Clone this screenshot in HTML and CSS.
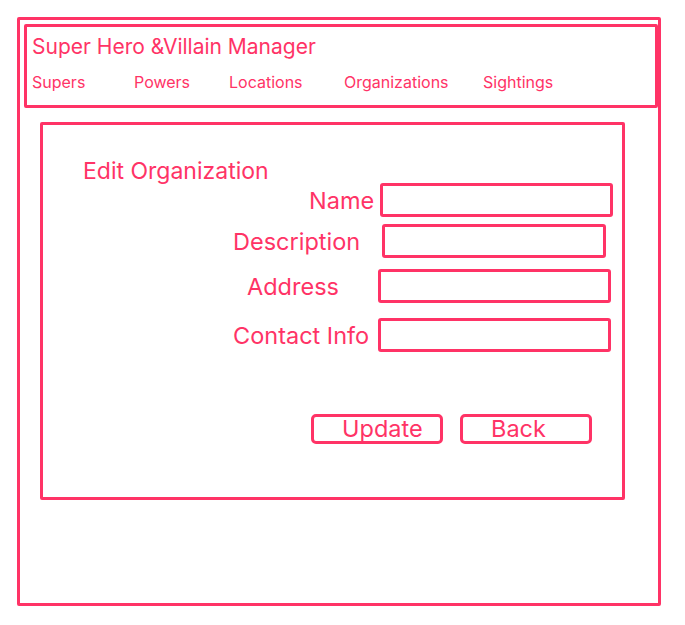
FILE: index.html
```html
<!DOCTYPE html>
<html lang="en">
<head>
<meta charset="utf-8">
<title>Edit Organization</title>
<link rel="stylesheet" href="styles.css">
</head>
<body>
<div class="page">
  <header class="header">
    <div class="title">Super Hero &amp;Villain Manager</div>
    <nav class="nav">
      <a class="nav-item w1">Supers</a>
      <a class="nav-item w2">Powers</a>
      <a class="nav-item w3">Locations</a>
      <a class="nav-item w4">Organizations</a>
      <a class="nav-item">Sightings</a>
    </nav>
  </header>
  <main class="panel">
    <h1 class="heading">Edit Organization</h1>
    <div class="row row-name">
      <label class="label">Name</label>
      <div class="input input-name"></div>
    </div>
    <div class="row row-desc">
      <label class="label">Description</label>
      <div class="input input-desc"></div>
    </div>
    <div class="row row-addr">
      <label class="label">Address</label>
      <div class="input"></div>
    </div>
    <div class="row row-contact">
      <label class="label">Contact Info</label>
      <div class="input"></div>
    </div>
    <div class="buttons">
      <div class="btn">Update</div>
      <div class="btn">Back</div>
    </div>
  </main>
</div>
</body>
</html>
```
FILE: styles.css
```css
* { box-sizing: border-box; }
html, body { margin: 0; padding: 0; background: #ffffff; }
body {
  font-family: "Inter", "Liberation Sans", sans-serif;
  font-weight: 400;
  color: #ff3366;
}
.page {
  margin: 17px 0 0 17px;
  width: 644px;
  height: 589px;
  border: 3px solid #ff3366;
  border-radius: 2px;
  padding: 4px 0 0 4px;
}
.header {
  width: 634px;
  height: 84px;
  border: 3px solid #ff3366;
  border-radius: 2px;
  padding: 8px 0 0 5px;
}
.title {
  font-size: 21px;
  line-height: 24px;
}
.nav {
  display: flex;
  margin-top: 13px;
  font-size: 16px;
  line-height: 20px;
}
.nav-item { display: block; }
.w1 { width: 102px; }
.w2 { width: 95px; }
.w3 { width: 115px; }
.w4 { width: 139px; }
.panel {
  margin: 14px 0 0 16px;
  width: 585px;
  height: 378px;
  border: 3px solid #ff3366;
  border-radius: 2px;
  padding: 34px 0 0 40px;
}
.heading {
  margin: 0;
  font-size: 23px;
  line-height: 24px;
  font-weight: 400;
}
.row {
  display: flex;
  align-items: center;
  height: 34px;
  margin-left: -40px;
  font-size: 23.5px;
}
.label { display: block; flex: none; }
.input {
  width: 233px;
  height: 34px;
  border: 3px solid #ff3366;
  border-radius: 3px;
}
.input-desc { width: 224px; }
.row-name .label { width: 337px; padding-left: 266px; }
.row-desc { margin-top: 7px; }
.row-desc .label { width: 339px; padding-left: 190px; }
.row-addr { margin-top: 11px; }
.row-addr .label { width: 335px; padding-left: 204px; }
.row-contact { margin-top: 15px; }
.row-contact .label { width: 335px; padding-left: 190px; }
.buttons {
  display: flex;
  gap: 17px;
  margin: 62px 0 0 228px;
}
.btn {
  width: 132px;
  height: 30px;
  border: 3px solid #ff3366;
  border-radius: 5px;
  padding-left: 28px;
  font-size: 23.5px;
  line-height: 24px;
}
```
